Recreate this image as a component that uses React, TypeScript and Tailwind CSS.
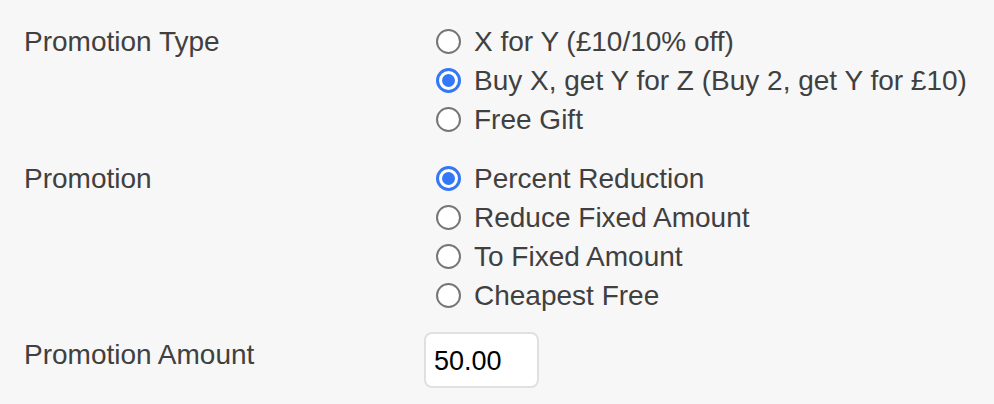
import React from "react";

function Radio({ checked }: { checked?: boolean }) {
  return checked ? (
    <span className="w-[25px] h-[25px] rounded-full border-[3px] border-[#3478f6] bg-white flex items-center justify-center shrink-0">
      <span className="w-[13px] h-[13px] rounded-full bg-[#3478f6]" />
    </span>
  ) : (
    <span className="w-[25px] h-[25px] rounded-full border-2 border-[#767676] bg-white shrink-0" />
  );
}

function Option({ label, checked }: { label: string; checked?: boolean }) {
  return (
    <div className="flex items-center h-[39px] pl-[10px]">
      <Radio checked={checked} />
      <span className="ml-[13px]">{label}</span>
    </div>
  );
}

export default function App() {
  return (
    <div
      className="w-full h-[404px] bg-[#f7f7f7] text-[#404040] text-[28px] pt-[22px] pl-[24px]"
      style={{ fontFamily: '"Liberation Sans", Arial, sans-serif' }}
    >
      <div className="grid grid-cols-[402px_1fr]">
        <div className="h-[39px] flex items-center">Promotion Type</div>
        <div>
          <Option label="X for Y (£10/10% off)" />
          <Option label="Buy X, get Y for Z (Buy 2, get Y for £10)" checked />
          <Option label="Free Gift" />
        </div>
      </div>
      <div className="grid grid-cols-[402px_1fr] mt-[20px]">
        <div className="h-[39px] flex items-center">Promotion</div>
        <div>
          <Option label="Percent Reduction" checked />
          <Option label="Reduce Fixed Amount" />
          <Option label="To Fixed Amount" />
          <Option label="Cheapest Free" />
        </div>
      </div>
      <div className="grid grid-cols-[400px_1fr] mt-[17px] items-start">
        <div className="h-[45px] flex items-center">Promotion Amount</div>
        <div>
          <div className="w-[115px] h-[56px] bg-white border-2 border-[#e0e0e0] rounded-[8px] flex items-center pl-[8px] text-black text-[27px] pt-[3px]">
            50.00
          </div>
        </div>
      </div>
    </div>
  );
}
